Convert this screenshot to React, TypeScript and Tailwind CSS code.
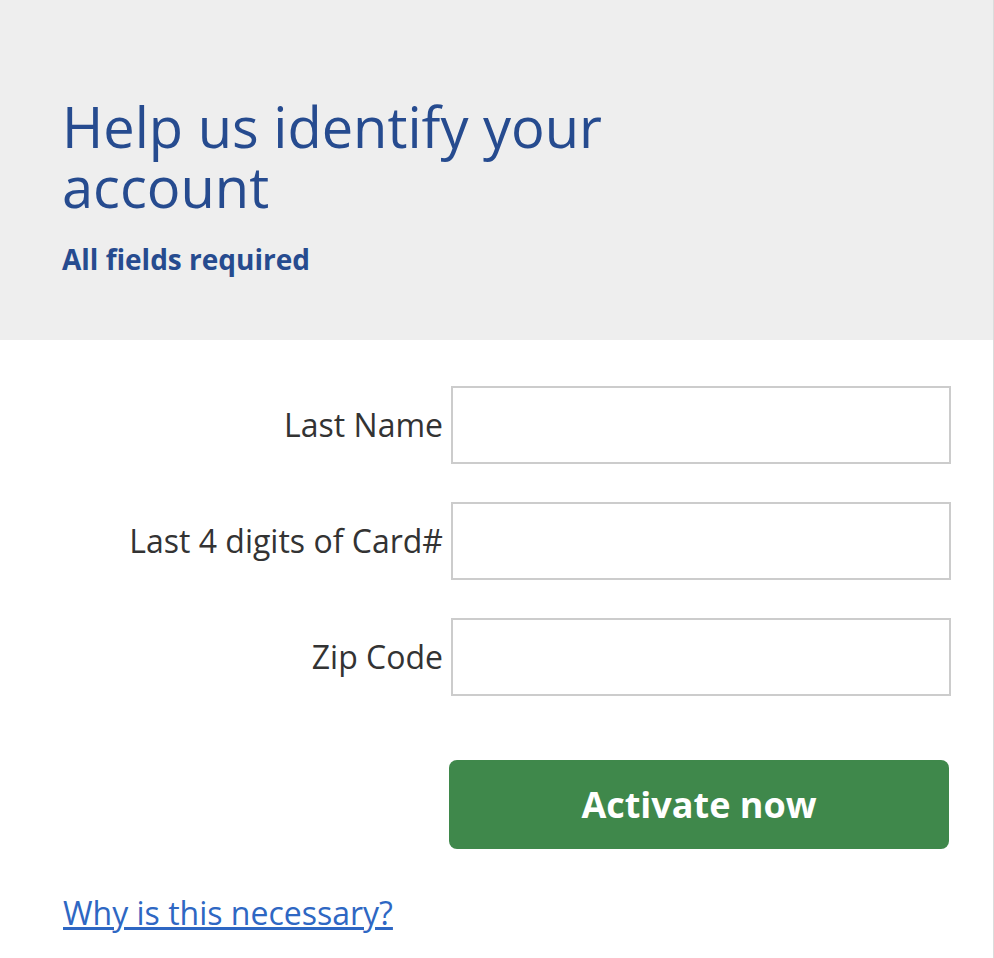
import * as React from "react";

const fields = ["Last Name", "Last 4 digits of Card#", "Zip Code"];

export default function App() {
  return (
    <div
      className="min-h-[958px] w-[994px] border-r border-[#dcdcdc] bg-white"
      style={{ fontFamily: '"Open Sans", sans-serif' }}
    >
      <div className="h-[340px] bg-[#eeeeee] px-[62px] pt-[96px]">
        <h1 className="max-w-[600px] text-[56px] leading-[60px] text-[#264b8f]">
          Help us identify your account
        </h1>
        <p className="mt-[24px] text-[28px] font-bold leading-[38px] text-[#264b8f]">
          All fields required
        </p>
      </div>

      <div className="pt-[46px]">
        {fields.map((label) => (
          <div key={label} className="mb-[38px] flex items-center justify-end pr-[42px]">
            <label className="mr-[8px] text-[32px] text-[#333333]">{label}</label>
            <input className="h-[78px] w-[500px] border-2 border-[#cccccc] bg-white outline-none" />
          </div>
        ))}

        <div className="flex justify-end pr-[44px] pt-[26px]">
          <button className="h-[89px] w-[500px] rounded-[8px] bg-[#3f884b] text-[36px] font-bold text-white">
            Activate now
          </button>
        </div>

        <div className="px-[63px] pt-[42px]">
          <a href="#" className="text-[32px] leading-[44px] text-[#2e67c3] underline">
            Why is this necessary?
          </a>
        </div>
      </div>
    </div>
  );
}
